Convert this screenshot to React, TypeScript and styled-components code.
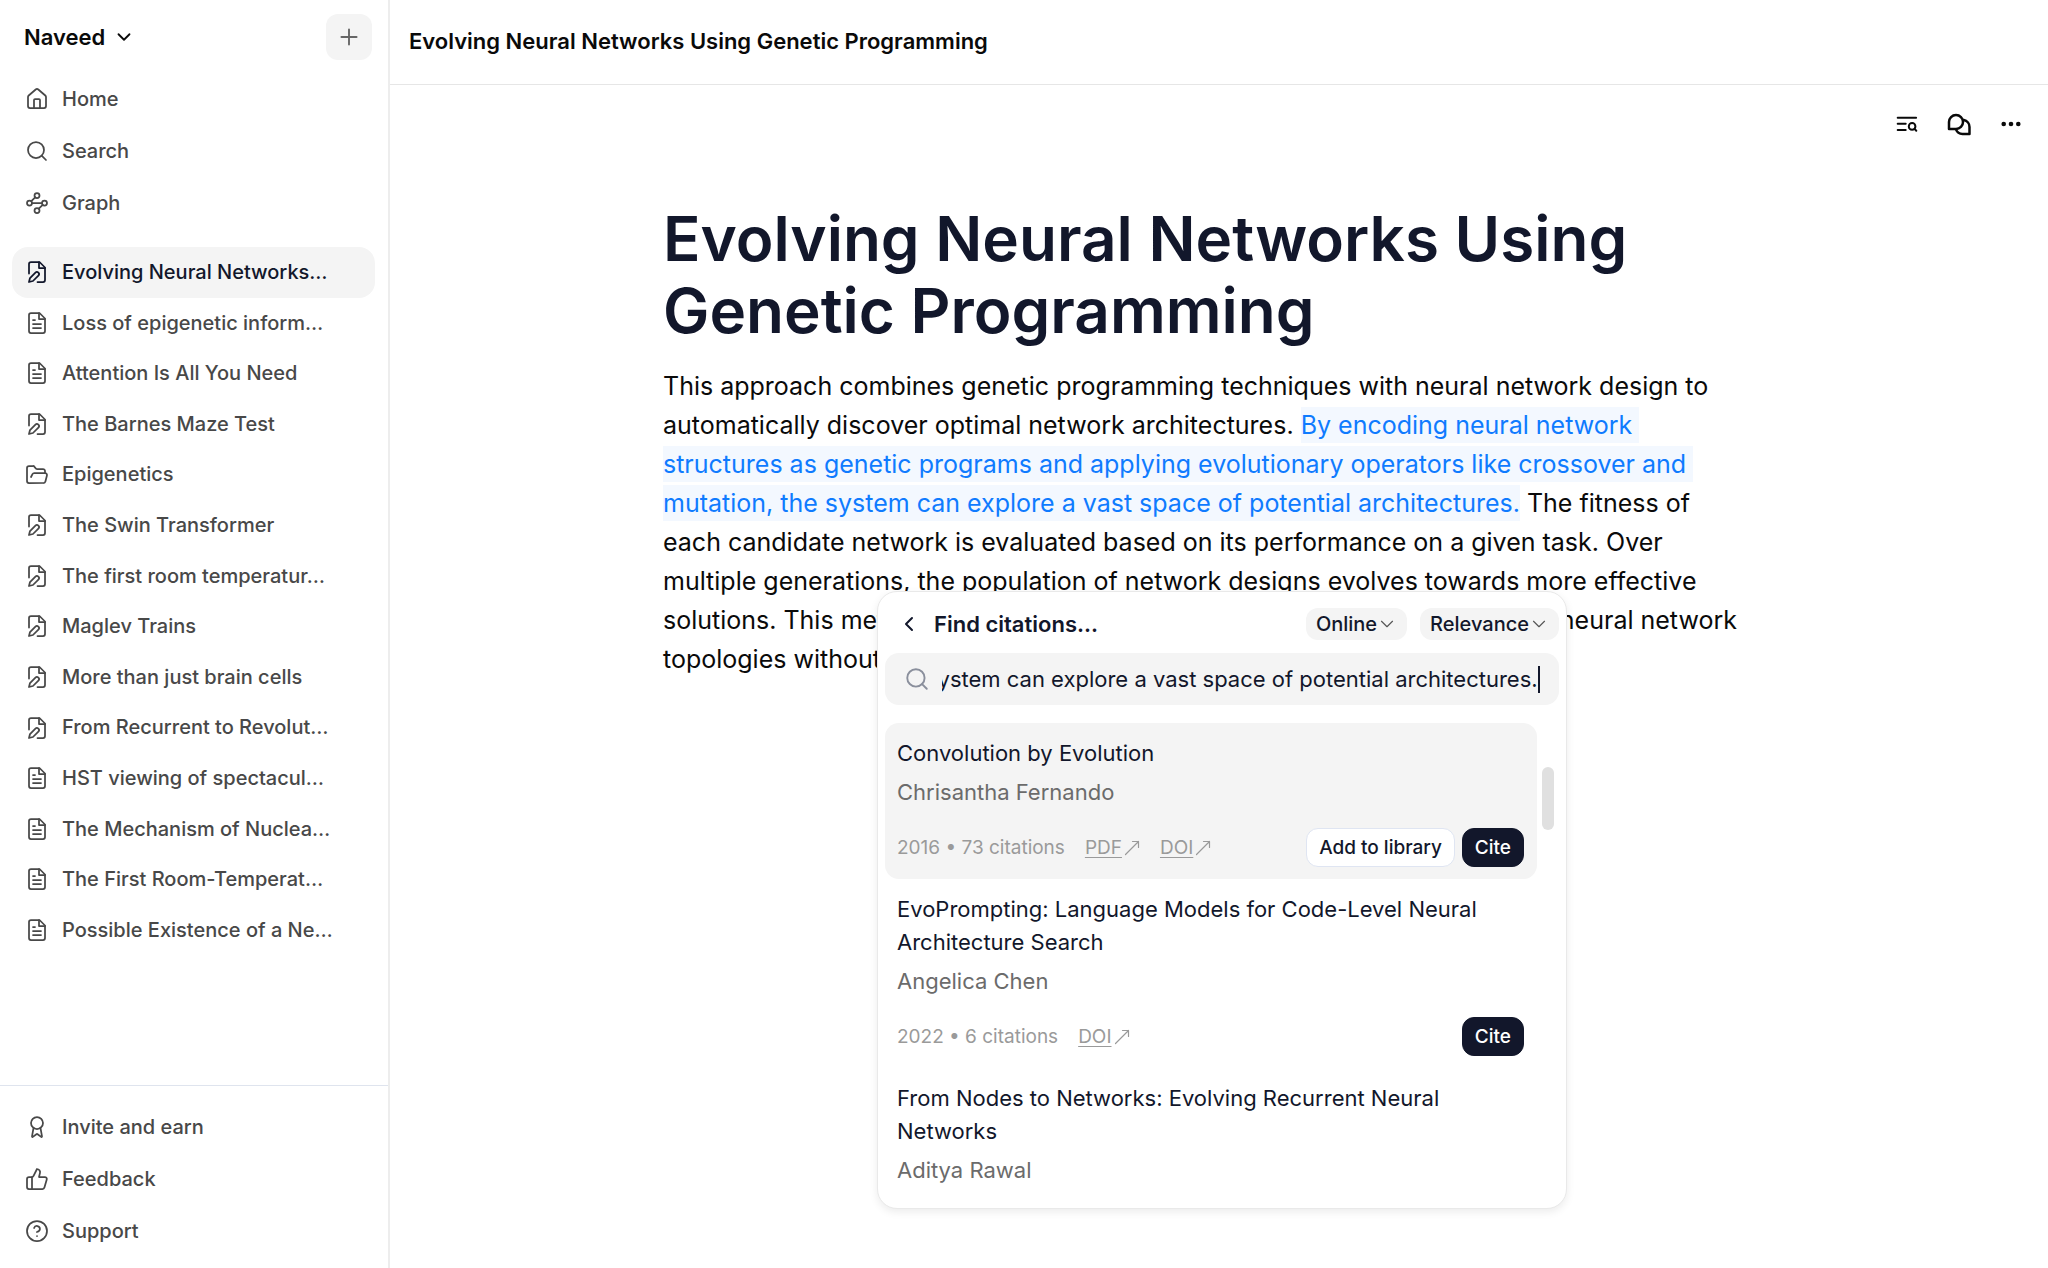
import React, { useEffect, useRef } from "react";
import styled, { createGlobalStyle, css } from "styled-components";
import {
  Award,
  ChevronDown,
  ChevronLeft,
  CircleHelp,
  FolderOpen,
  House,
  Plus,
  Search,
  ThumbsUp,
  Waypoints,
} from "lucide-react";

const GlobalStyle = createGlobalStyle`
  *, *::before, *::after { box-sizing: border-box; }
  body {
    margin: 0;
    background: #fff;
    color: #0a0a0a;
    font-family: Inter, "Liberation Sans", sans-serif;
    font-size: 20px;
  }
  button, input, select { font: inherit; color: inherit; }
  button { cursor: pointer; }
`;

/* ---------- icons ---------- */

const Svg = styled.svg<{ $size?: number; $stroke?: number }>`
  flex: none;
  width: ${(p) => p.$size ?? 24}px;
  height: ${(p) => p.$size ?? 24}px;
  fill: none;
  stroke: currentColor;
  stroke-width: ${(p) => p.$stroke ?? 1.75};
  stroke-linecap: round;
  stroke-linejoin: round;
`;

const NoteIcon = () => (
  <Svg viewBox="0 0 24 24" aria-hidden="true">
    <path d="M4 13.5V4a2 2 0 0 1 2-2h8.5L20 7.5V20a2 2 0 0 1-2 2h-5.5" />
    <path d="M14 2v6h6" />
    <path d="M10.42 12.61a2.1 2.1 0 1 1 2.97 2.97L7.95 21 4 22l.99-3.95 5.43-5.44Z" />
  </Svg>
);

const PaperIcon = () => (
  <Svg viewBox="0 0 24 24" aria-hidden="true">
    <path d="M14.5 2H6a2 2 0 0 0-2 2v16a2 2 0 0 0 2 2h12a2 2 0 0 0 2-2V7.5L14.5 2z" />
    <path d="M14 2v6h6M16 13H8M16 17H8M10 9H8" />
  </Svg>
);

const OutlineSearchIcon = () => (
  <Svg viewBox="0 0 24 24" $stroke={2} aria-hidden="true">
    <path d="M2.7 5.7h18.4M2.7 11.7h8M2.7 18h8" />
    <circle cx="17.1" cy="14.4" r="3.3" />
    <path d="m19.5 16.9 1.8 1.9" />
  </Svg>
);

const ChatsIcon = () => (
  <Svg viewBox="0 0 24 24" $stroke={2.5} aria-hidden="true">
    <path d="M2 17V10a7 7 0 1 1 7 7Z" />
    <path d="M16.8 8A7 7 0 0 1 22.5 15v7h-7A7 7 0 0 1 9 17.4" />
  </Svg>
);

const DotsIcon = () => (
  <Svg viewBox="0 0 24 24" $stroke={0} aria-hidden="true">
    <g fill="currentColor">
      <circle cx="4.7" cy="12" r="2.3" />
      <circle cx="12" cy="12" r="2.3" />
      <circle cx="19.3" cy="12" r="2.3" />
    </g>
  </Svg>
);

const OutArrow = () => (
  <Svg viewBox="0 0 16 16" $size={16} $stroke={1.2} aria-hidden="true">
    <path d="M1.5 14.5l13-13M8.5 1.5h6v6" />
  </Svg>
);

/* ---------- shell ---------- */

const Shell = styled.div`
  display: flex;
  min-height: 100vh;
`;

const Sidebar = styled.aside`
  display: flex;
  flex: none;
  flex-direction: column;
  width: 390px;
  border-right: 2px solid #ededed;
  color: #484848;
  font-weight: 500;
`;

const SidebarTop = styled.div`
  display: flex;
  align-items: center;
  justify-content: space-between;
  padding: 14px 16px 13px 24px;
`;

const Workspace = styled.button`
  display: flex;
  align-items: center;
  gap: 8px;
  padding: 0;
  border: 0;
  background: none;
  color: #0a0a0a;
  font-size: 22px;
  font-weight: 600;
`;

const NewButton = styled.button`
  display: grid;
  place-items: center;
  width: 46px;
  height: 46px;
  padding: 0;
  border: 0;
  border-radius: 12px;
  background: #f4f4f4;
  color: #666;
`;

const NavList = styled.ul`
  margin: 0;
  padding: 0 13px 0 12px;
  list-style: none;
`;

const DocList = styled(NavList)`
  flex: 1;
  margin-top: 18px;
`;

const SidebarFooter = styled.div`
  padding: 15px 0 11px;
  border-top: 1px solid #dfe4ee;
`;

const NavLink = styled.a<{ $dense?: boolean; $active?: boolean }>`
  display: flex;
  align-items: center;
  gap: 13px;
  padding: 0 13px;
  border-radius: 16px;
  color: inherit;
  line-height: ${(p) => (p.$dense ? 2.53 : 2.6)};
  text-decoration: none;
  white-space: nowrap;
  ${(p) =>
    p.$active &&
    css`
      background: #f4f4f4;
      color: #12172b;
    `}
`;

/* ---------- main ---------- */

const Main = styled.main`
  flex: 1;
  min-width: 0;
`;

const DocHeader = styled.header`
  display: flex;
  align-items: center;
  height: 85px;
  padding: 0 19px 3px;
  border-bottom: 1px solid #e6e6e6;
  font-size: 22px;
  font-weight: 600;
`;

const Toolbar = styled.div`
  display: flex;
  justify-content: flex-end;
  gap: 12px;
  padding: 19px 17px 0;
`;

const ToolButton = styled.button`
  display: grid;
  place-items: center;
  width: 40px;
  height: 40px;
  padding: 0;
  border: 0;
  background: none;
`;

const Article = styled.article`
  position: relative;
  max-width: 1112px;
  margin: 59px auto 0;
  padding-right: 24px;
`;

const Title = styled.h1`
  margin: 0 0 20px;
  color: #12172b;
  font-size: 62px;
  font-weight: 600;
  line-height: 72px;
`;

const Body = styled.p`
  margin: 0;
  font-size: 25px;
  line-height: 39px;
  white-space: pre-wrap;
`;

const Highlight = styled.span`
  padding: 3px 0;
  background: #f3f8ff;
  color: #0f7bff;
`;

/* ---------- citation popover ---------- */

const Popover = styled.section`
  position: absolute;
  top: 388px;
  left: 214px;
  width: 690px;
  padding: 16px 7px 9px;
  border: 1px solid #e9e9e9;
  border-radius: 20px;
  background: #fff;
  box-shadow: 0 3px 8px rgba(0, 0, 0, 0.08);
  color: #12172b;
  font-size: 22px;
`;

const PopoverHeader = styled.div`
  display: flex;
  align-items: center;
  gap: 13px;
  padding-left: 12px;
`;

const BackButton = styled.button`
  display: grid;
  padding: 0;
  border: 0;
  background: none;
`;

const PopoverTitle = styled.h2`
  flex: 1;
  margin: 0;
  font-size: 22px;
  font-weight: 600;
  line-height: 32px;
`;

const Pill = styled.label`
  position: relative;
  display: flex;
  align-items: center;
  font-size: 20px;
  font-weight: 500;

  select {
    field-sizing: content;
    height: 32px;
    padding: 0 30px 0 10px;
    border: 0;
    border-radius: 12px;
    appearance: none;
    background: #f4f4f4;
  }

  svg {
    position: absolute;
    right: 9px;
    color: #555;
    pointer-events: none;
  }
`;

const SearchField = styled.label`
  display: flex;
  align-items: center;
  height: 52px;
  margin: 13px 0 18px;
  padding: 0 19px;
  border-radius: 14px;
  background: #f4f4f4;

  svg {
    flex: none;
    margin-right: 12px;
    color: #8a8f9c;
  }

  input {
    flex: 1;
    min-width: 0;
    padding: 0;
    border: 0;
    outline: 0;
    background: none;
  }
`;

const Caret = styled.span`
  width: 2px;
  height: 27px;
  background: #12172b;
`;

const Results = styled.div`
  display: flex;
  gap: 5px;
  padding-right: 5px;
`;

const ResultList = styled.ul`
  flex: 1;
  margin: 0;
  padding: 0;
  list-style: none;
`;

const ScrollThumb = styled.div`
  width: 12px;
  height: 63px;
  margin-top: 44px;
  border-radius: 6px;
  background: #e0e0e0;
`;

const ResultCard = styled.li<{ $active?: boolean }>`
  padding: 14px 13px 12px 12px;
  border-radius: 14px;
  background: ${(p) => (p.$active ? "#f4f4f4" : "transparent")};
  line-height: 33px;
`;

const ResultTitle = styled.h3`
  margin: 0 0 6px;
  font-size: 22px;
  font-weight: 400;
`;

const Author = styled.div`
  color: #6b6b6b;
`;

const MetaRow = styled.div`
  display: flex;
  align-items: center;
  justify-content: space-between;
  margin-top: 19px;
  font-size: 19px;
`;

const Meta = styled.div`
  display: flex;
  gap: 20px;
  color: #9a9a9a;
`;

const SourceLink = styled.a`
  display: flex;
  align-items: center;
  gap: 2px;
  color: inherit;
  text-decoration: none;

  span {
    text-decoration: underline;
    text-underline-offset: 3px;
  }
`;

const Actions = styled.div`
  display: flex;
  gap: 7px;
`;

const ActionButton = styled.button<{ $primary?: boolean }>`
  height: 39px;
  padding: 0 12px;
  border: 1px solid ${(p) => (p.$primary ? "#12172b" : "#dfe5f2")};
  border-radius: 12px;
  background: ${(p) => (p.$primary ? "#12172b" : "#fff")};
  color: ${(p) => (p.$primary ? "#fff" : "#12172b")};
  font-weight: 500;
`;

/* ---------- data ---------- */

const docs: { name: string; kind: "note" | "paper" | "folder"; active?: boolean }[] = [
  { name: "Evolving Neural Networks…", kind: "note", active: true },
  { name: "Loss of epigenetic inform…", kind: "paper" },
  { name: "Attention Is All You Need", kind: "paper" },
  { name: "The Barnes Maze Test", kind: "note" },
  { name: "Epigenetics", kind: "folder" },
  { name: "The Swin Transformer", kind: "note" },
  { name: "The first room temperatur…", kind: "note" },
  { name: "Maglev Trains", kind: "note" },
  { name: "More than just brain cells", kind: "note" },
  { name: "From Recurrent to Revolut…", kind: "note" },
  { name: "HST viewing of spectacul…", kind: "paper" },
  { name: "The Mechanism of Nuclea…", kind: "paper" },
  { name: "The First Room-Temperat…", kind: "paper" },
  { name: "Possible Existence of a Ne…", kind: "paper" },
];

const results: {
  title: string;
  author: string;
  meta?: string;
  links?: string[];
  addable?: boolean;
}[] = [
  {
    title: "Convolution by Evolution",
    author: "Chrisantha Fernando",
    meta: "2016 • 73 citations",
    links: ["PDF", "DOI"],
    addable: true,
  },
  {
    title: "EvoPrompting: Language Models for Code-Level Neural Architecture Search",
    author: "Angelica Chen",
    meta: "2022 • 6 citations",
    links: ["DOI"],
  },
  {
    title: "From Nodes to Networks: Evolving Recurrent Neural Networks",
    author: "Aditya Rawal",
  },
];

const sentence =
  "By encoding neural network structures as genetic programs and applying evolutionary operators like crossover and mutation, the system can explore a vast space of potential architectures.";

const docIcons = {
  note: <NoteIcon />,
  paper: <PaperIcon />,
  folder: <FolderOpen size={24} strokeWidth={1.75} />,
};

function CitationPopover() {
  const input = useRef<HTMLInputElement>(null);

  // Keep the end of the query in view, where the caret is.
  useEffect(() => {
    if (input.current) input.current.scrollLeft = input.current.scrollWidth;
  }, []);

  return (
    <Popover aria-label="Find citations">
      <PopoverHeader>
        <BackButton aria-label="Back">
          <ChevronLeft size={24} strokeWidth={2} />
        </BackButton>
        <PopoverTitle>Find citations...</PopoverTitle>
        <Pill>
          <select aria-label="Source">
            <option>Online</option>
          </select>
          <ChevronDown size={22} strokeWidth={1.25} />
        </Pill>
        <Pill>
          <select aria-label="Sort by">
            <option>Relevance</option>
          </select>
          <ChevronDown size={22} strokeWidth={1.25} />
        </Pill>
      </PopoverHeader>
      <SearchField>
        <Search size={26} strokeWidth={1.75} />
        <input ref={input} aria-label="Search citations" defaultValue={sentence} />
        <Caret />
      </SearchField>
      <Results>
        <ResultList>
          {results.map((r, i) => (
            <ResultCard key={r.title} $active={i === 0}>
              <ResultTitle>{r.title}</ResultTitle>
              <Author>{r.author}</Author>
              {r.meta && (
                <MetaRow>
                  <Meta>
                    {r.meta}
                    {r.links?.map((l) => (
                      <SourceLink key={l} href="#">
                        <span>{l}</span>
                        <OutArrow />
                      </SourceLink>
                    ))}
                  </Meta>
                  <Actions>
                    {r.addable && <ActionButton>Add to library</ActionButton>}
                    <ActionButton $primary>Cite</ActionButton>
                  </Actions>
                </MetaRow>
              )}
            </ResultCard>
          ))}
        </ResultList>
        <ScrollThumb />
      </Results>
    </Popover>
  );
}

export default function App() {
  return (
    <Shell>
      <GlobalStyle />
      <Sidebar>
        <SidebarTop>
          <Workspace>
            Naveed
            <ChevronDown size={22} strokeWidth={2} />
          </Workspace>
          <NewButton aria-label="New document">
            <Plus size={26} strokeWidth={1.75} />
          </NewButton>
        </SidebarTop>
        <NavList>
          <li>
            <NavLink href="#">
              <House size={24} strokeWidth={1.75} />
              Home
            </NavLink>
          </li>
          <li>
            <NavLink href="#">
              <Search size={24} strokeWidth={1.75} />
              Search
            </NavLink>
          </li>
          <li>
            <NavLink href="#">
              <Waypoints size={24} strokeWidth={1.75} />
              Graph
            </NavLink>
          </li>
        </NavList>
        <DocList>
          {docs.map((d) => (
            <li key={d.name}>
              <NavLink href="#" $dense $active={d.active}>
                {docIcons[d.kind]}
                {d.name}
              </NavLink>
            </li>
          ))}
        </DocList>
        <SidebarFooter>
          <NavList>
            <li>
              <NavLink href="#">
                <Award size={24} strokeWidth={1.75} />
                Invite and earn
              </NavLink>
            </li>
            <li>
              <NavLink href="#">
                <ThumbsUp size={24} strokeWidth={1.75} />
                Feedback
              </NavLink>
            </li>
            <li>
              <NavLink href="#">
                <CircleHelp size={24} strokeWidth={1.75} />
                Support
              </NavLink>
            </li>
          </NavList>
        </SidebarFooter>
      </Sidebar>
      <Main>
        <DocHeader>Evolving Neural Networks Using Genetic Programming</DocHeader>
        <Toolbar>
          <ToolButton aria-label="Find in document">
            <OutlineSearchIcon />
          </ToolButton>
          <ToolButton aria-label="Chat">
            <ChatsIcon />
          </ToolButton>
          <ToolButton aria-label="More">
            <DotsIcon />
          </ToolButton>
        </Toolbar>
        <Article>
          <Title>Evolving Neural Networks Using Genetic Programming</Title>
          <Body>
            {
              "This approach combines genetic programming techniques with neural network design to automatically discover optimal network architectures. "
            }
            <Highlight>{sentence}</Highlight>
            {
              " The fitness of each candidate network is evaluated based on its performance on a given task. Over multiple generations, the population of network designs evolves towards more effective solutions. This method allows for the discovery of novel and highly efficient neural network topologies without manual design."
            }
          </Body>
          <CitationPopover />
        </Article>
      </Main>
    </Shell>
  );
}
